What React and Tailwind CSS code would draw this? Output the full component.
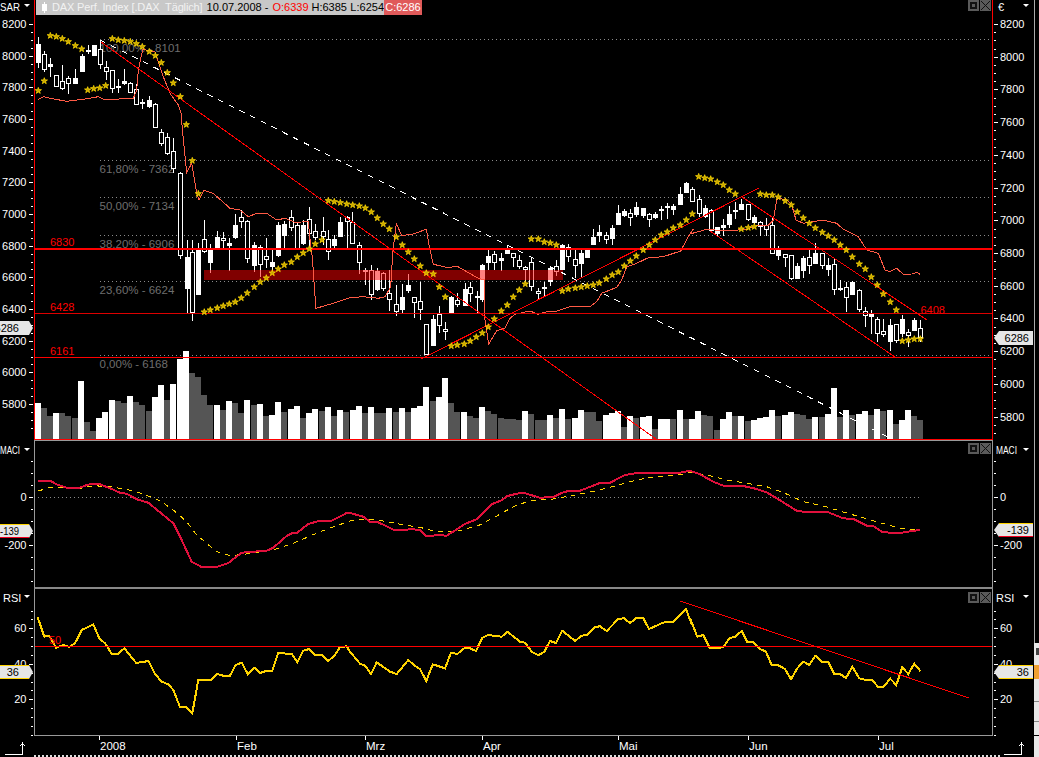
// chart data is kept in page pixels, each svg viewBox uses page coordinates
const at = (ox, oy, list) => list.map(([x, y]) => [ox + x / 3, oy + y / 3]);
const line = (list) => list.map(([x, y]) => `${x.toFixed(1)},${y.toFixed(1)}`).join(" ");

// x, high, low, body top, body bottom, filled
const candles = [
  [38.3,37,68,44,62,1],[44.3,51,72,54,69,0],[50.3,58,77,64,66,1],[56.3,75,87,75,86,0],[62.3,65,90,81,88,0],[68.3,76,94,78,83,0],
  [75.3,69,83,78,83,1],[81.5,54,71,55.5,71,1],[87.6,45,54,50,51,1],[93.7,45,55,45,55,1],[99.7,40,69,49,64,0],[105.5,61,80,66.5,71,0],
  [112,70,93,70,88,0],[118,79,93,86,87,1],[124.3,69,85,81,83,1],[130.3,82,93,82.5,92,0],[136.3,84,105,89,104,0],[142.3,99,109,102,103,1],
  [149.3,96,108,100,106,1],[155.3,103,127,103.5,127,0],[161.3,129,146,132,143,0],[167.3,133,155,137,153,0],[173.3,138,173,151,168,0],
  [180.3,172,259,172.5,254.5,0],[186.5,240,314,257,288,1],[192.3,240,320.7,251.7,311.7,0],[198.3,243,293.5,248,293.5,1],[204.3,220,253,239,250.7,0],
  [210.3,244,273,249,262,1],[217.3,231,250,237,248,1],[223.3,232,250,238,240,0],[229.3,238,270.7,243,245,1],[235.3,214,239,225,237,1],
  [241.3,210,228,217,221,0],[247.3,220,263,220.5,258,0],[254.3,242,272,245,265,1],[260.3,245,277,247,263.5,0],[266.3,238,268,256,258.7,0],
  [272.3,250,273,262,266,1],[278.3,222,257,225,255,1],[284.3,221,248,224,235,1],[291.3,210,231,217,227,0],[297.3,223,248,225,247.7,0],
  [303.3,220,245,225,243,1],[309.3,207,250,219,233,0],[315.3,224,240,231,236.7,0],[322.6,217,245,231,236,0],[328.3,230,260,238.5,251.3,0],
  [334.3,235,250,239,245,1],[340.3,217,236,222,236,1],[346.6,216,248,217,221,0],[352.3,212,243,221.7,242.7,0],[359.3,242,274,245,261.7,0],
  [365.3,268,285,270,270.5,1],[371.3,265,300,270,294.3,0],[377.3,268,290.7,271,289,1],[383.3,272,290.7,273.3,287.7,0],[389.3,270,311,293.3,299.3,0],
  [396.3,285,315.7,304.3,311,0],[402.3,284,313,297.3,309,1],[408.3,274,293,285,290,1],[414.3,297,318,297.3,301.7,0],[420.3,281.7,320,301.3,309.3,0],
  [426.3,324,355,324.3,354,0],[433.3,315,345,319,345,1],[439.3,306,332.7,314,324.7,0],[445.3,322,340,329.3,331.3,0],[451.3,296,312,297,311.7,1],
  [457.3,293,306.7,300,304,0],[464.7,283,305,289,305,1],[470.3,282.3,301.7,287,292.7,0],[476.7,291,313,296,297,1],[482.3,264,301.7,265,299.3,1],
  [488.3,250,270,256,262,1],[494.3,251,270,254,262.3,0],[501.3,253,271,258,260,1],[507.3,245,253,248.7,252.7,1],[513.3,253,266.7,253.3,257.3,0],
  [519.3,255,268.7,260,265.7,0],[525.3,266,285,266.7,268.7,0],[531.3,257.7,290.7,262.3,286,0],[538.3,288,299,291,293.3,0],[544.3,281.7,296,286.5,287,1],
  [550.3,267,285.7,268.3,281,1],[556.3,260,276,266.3,271.3,0],[562.3,244,269,245.3,268.7,1],[568.3,244,261.7,246.7,256,0],[575.3,249,278,259,264.7,0],
  [581.3,248,276.7,253.3,263.3,1],[587.3,248,257,249,257,1],[593.3,229.3,245,237,243.7,1],[599.3,225,241.7,232.3,235,1],[606.3,232,244,235.3,238.7,0],
  [612.3,225,245,228,238.3,1],[618.3,205,224,213.3,224,1],[624.3,209,217,211,215,1],[630.3,209.3,225.7,213.3,217.3,0],[636.3,202.3,217,207.3,213.7,1],
  [643.3,208,218,208.3,215,1],[649.3,213,226.7,213.7,219.3,0],[655.3,212,219,214,217,1],[661.3,205.7,220,209,210.3,1],[667.3,203.3,219,205.7,206,1],
  [673.3,204,215,206,208.7,1],[680.3,187.3,204,194,203.7,1],[686.3,181.7,193,183.3,192,1],[692.3,186.7,201.7,189.3,201,0],[698.7,195,216.7,199.3,213.3,0],
  [704.7,205,218,208,216,1],[710.7,209,232,210,230,0],[717.3,226.7,236.7,226.7,233.3,1],[723.3,219,235.7,225,226.5,1],[729.3,206,227.7,214,224,1],
  [735.3,201.7,219.3,210.3,210.8,1],[741.3,199,209.3,204,209.3,1],[748.3,204,220.7,204,219,0],[754.3,215,224,216.7,222.3,1],[760.3,221,236,221.7,226,0],
  [766.3,218,236,225,229.3,0],[772.3,218,253.3,225,252.7,0],[778.3,246,260,250,255,1],[785.3,254.3,266.7,254.3,257.3,0],[791.3,255,280,255.3,278.3,0],
  [797.3,263.3,278,266,277.7,1],[803.3,256,277.7,258.3,270,1],[809.3,250,274,257.3,264.7,0],[815.3,243.3,262.7,252.7,262.7,1],[822.3,253,269,253.3,264.7,0],
  [828.3,258.3,276,264.7,269,1],[834.3,259,295,264.3,289.3,0],[840.3,280,291,288,288.5,1],[846.3,281.7,312,287.3,296.7,0],[852.3,280.7,294,282,294,1],
  [859.3,289,311.7,290,308.7,0],[865.3,307.3,326.7,310.7,315,0],[871.3,310,334,314,315.7,1],[877.3,317.3,342.3,319.3,332.7,0],[883.3,319,336.7,331.3,334.3,0],
  [890.3,319,350.7,325,340.7,1],[896.3,324,342.7,324.3,340,0],[902.3,315,337.3,319,333.3,1],[908.3,329,346.7,332.3,335,0],[914.3,318.3,330,320,330,1],
  [920.3,320,342.3,328.3,336.7,0],
];

// x, top, white
const volume = [
  [35,403,1],[41,408,0],[47,416,0],[53,413,1],[59,413,0],[65,416,0],[72,418,0],[78,381,1],[84,422,0],[90,431,0],[96,418,1],[102,412,1],[109,400,1],
  [115,401,0],[121,403,0],[127,396,1],[133,402,0],[139,405,0],[146,411,0],[152,397,1],[158,385,1],[164,400,0],[170,384,1],[177,359,1],[183,351,1],
  [189,373,0],[195,377,0],[201,395,0],[207,405,0],[214,405,1],[220,410,0],[226,401,1],[232,403,0],[238,413,0],[244,400,1],[251,405,0],[257,404,1],
  [263,416,0],[269,415,1],[275,402,1],[281,412,0],[288,409,1],[294,406,1],[300,418,0],[306,413,1],[312,409,1],[319,411,0],[325,407,1],[331,416,0],
  [337,410,1],[343,412,0],[350,410,1],[356,406,1],[362,413,0],[368,407,1],[374,413,0],[380,413,0],[386,408,1],[393,412,0],[399,408,1],[405,412,0],
  [411,408,1],[417,406,1],[423,387,1],[430,401,0],[436,397,1],[442,378,1],[448,403,0],[454,412,0],[461,412,1],[467,416,0],[473,418,0],[479,407,1],
  [485,411,0],[491,414,0],[498,418,0],[504,419,0],[510,419,0],[516,420,0],[522,411,1],[528,414,0],[535,420,0],[541,420,0],[547,415,1],[553,418,0],
  [559,409,1],[565,419,0],[572,418,1],[578,410,1],[584,412,0],[590,412,0],[596,421,0],[603,415,1],[609,413,1],[615,411,1],[621,427,0],[627,416,1],
  [633,418,0],[640,417,1],[646,416,1],[652,429,0],[658,419,1],[664,419,1],[670,419,0],[677,410,1],[683,419,0],[689,419,1],[695,411,1],[701,415,0],
  [707,416,0],[714,430,0],[720,419,1],[726,412,1],[732,416,0],[738,416,1],[745,421,0],[751,420,1],[757,418,1],[763,417,1],[769,410,1],[775,416,0],
  [782,415,1],[788,412,1],[794,414,0],[800,415,0],[806,419,0],[812,417,1],[819,417,0],[825,414,1],[831,388,1],[837,417,0],[843,410,1],[849,415,0],
  [856,414,1],[862,411,1],[868,415,0],[874,409,1],[880,411,0],[887,410,1],[893,424,0],[899,420,1],[905,410,1],[911,416,0],[917,420,0],
];

const stars = [
  ...at(0, 0, [[115,272],[133,243],[151,107],[169,110],[187,116],[205,125],[226,137],[245,147],[263,270],[281,266],[299,264],[317,257],[337,116],[355,120],[373,122],[391,125],[409,131],[427,140],[448,155],[466,167],[484,188],[502,218],[520,249],[541,290],[559,374],[577,482],[595,581],[985,602],[1003,605],[1021,608],[1040,612]]),
  ...at(0, 230, [[613,246],[631,240],[652,234],[670,228],[688,222],[706,216],[724,204],[742,189],[763,171],[781,156],[799,144],[817,129],[835,117],[853,105],[874,96],[892,81],[910,69],[928,57],[946,42],[966,30]]),
  ...at(350, 170, [[8,105],[28,108],[46,114],[64,126],[82,144],[100,162],[118,177],[139,201],[157,225],[175,246],[193,267],[211,288],[229,309],[250,312],[268,351],[286,381],[304,528],[322,525],[343,522],[361,513],[379,501],[397,489],[415,471],[433,447],[454,423],[472,405],[490,381],[508,360],[526,342],[544,207],[565,207],[583,216],[601,219],[619,225],[637,363],[655,357],[676,354],[694,351],[712,348],[730,345],[748,339],[769,327],[787,315],[805,306],[823,288],[841,273],[859,258],[880,240],[898,225],[916,210],[934,195],[952,186],[970,174],[991,165],[1009,150],[1027,132]]),
  ...at(690, 0, [[26,530],[44,534],[62,537],[82,546],[100,555],[118,570],[136,582],[211,582],[229,585],[247,585],[265,591],[286,603],[304,615],[322,636],[340,654]]),
  ...at(690, 220, [[154,27],[175,23],[193,20],[358,10],[376,24],[397,37],[415,48],[433,60],[451,75],[469,90],[487,111],[508,132],[526,147],[544,171],[562,195],[580,222],[601,246],[619,270],[637,363],[655,360],[673,357],[691,357]]),
];

const envelope = [
  ...at(0, 0, [[115,298],[130,290],[150,295],[200,304],[250,298],[295,290],[315,300],[370,296],[400,295],[410,270],[415,210],[428,148],[465,155],[490,230],[510,280],[535,315],[543,340],[548,400],[560,518],[575,490],[590,580],[597,600],[612,571],[640,580],[690,625],[720,630],[745,650],[770,640],[800,640],[830,660],[855,655],[885,667],[925,665],[932,740]]),
  ...at(0, 230, [[937,80],[940,125],[943,170],[948,235],[1000,220],[1050,203]]),
  ...at(350, 170, [[40,380],[85,385],[105,380],[122,350],[128,250],[139,160],[155,197],[190,192],[229,178],[238,230],[250,283],[295,293],[320,288],[385,325],[404,330],[405,450],[416,522],[440,482],[465,475],[480,445],[495,433],[540,423],[565,433],[590,425],[620,423],[660,410],[720,410],[740,395],[755,370],[800,352],[815,330],[830,290],[860,280],[895,263],[940,260],[992,243],[1015,200],[1030,177]]),
  ...at(690, 220, [[0,42],[50,28],[110,33],[170,28],[205,15],[235,15]]),
  ...at(690, 0, [[250,660],[260,600],[265,595],[290,600],[305,615],[318,660],[340,670],[400,660],[440,670],[460,688]]),
  ...at(690, 220, [[505,50],[530,90],[565,100],[585,150],[600,155],[620,145],[640,163],[665,162],[680,157],[690,163]]),
];

const macdLine = [
  ...at(0, 435, [[115,137],[150,137],[170,148],[205,160],[235,160],[260,150],[280,146],[300,148],[330,160],[360,173],[380,176],[410,193],[445,203],[490,240],[520,265],[545,315],[575,380],[605,396],[650,396],[685,384],[725,353],[760,350],[800,347],[820,338],[860,303],[875,295],[890,294],[925,267],[960,257],[995,257],[1040,234]]),
  ...at(350, 435, [[0,234],[40,245],[60,260],[85,262],[130,284],[170,284],[180,282],[210,285],[228,302],[250,302],[262,300],[290,302],[345,267],[380,253],[425,208],[455,196],[472,183],[510,174],[525,175],[570,188],[610,186],[640,172],[660,167],[690,167],[750,144],[780,143],[825,120],[860,114],[985,114],[1020,107]]),
  ...at(690, 435, [[0,107],[30,118],[70,140],[100,152],[160,153],[200,162],[230,172],[260,190],[320,227],[340,230],[410,230],[460,250],[490,252],[530,272],[550,273],[575,290],[605,294],[635,293],[660,289],[690,285]]),
];

const signalLine = [
  ...at(0, 435, [[115,168],[150,157],[205,157],[240,160],[280,152],[330,155],[400,167],[445,183],[480,197],[520,225],[560,260],[590,300],[650,350],[690,362],[760,355],[820,345],[880,325],[960,290],[1050,258]]),
  ...at(350, 435, [[30,253],[70,253],[130,263],[160,270],[210,277],[250,288],[320,289],[385,272],[440,243],[490,215],[540,197],[610,192],[660,183],[725,170],[780,157],[840,140],[900,127],[1000,118]]),
  ...at(690, 435, [[0,112],[50,120],[110,135],[170,145],[230,155],[285,175],[340,200],[400,213],[480,237],[560,260],[630,280],[690,285]]),
];

const rsiLine = [
  ...at(0, 585, [[113,97],[133,155],[148,152],[168,188],[190,180],[208,186],[225,175],[245,135],[280,118],[298,160],[315,175],[335,206],[355,206],[373,190],[408,233],[428,232],[445,227],[465,267],[485,290],[505,298],[520,315],[540,366],[558,366],[577,385],[595,285],[633,285],[652,267],[670,272],[690,272],[707,240],[725,233],[743,267],[763,248],[780,264],[800,257],[817,257],[835,204],[875,207],[892,232],[910,197],[928,192],[945,209],[965,209],[985,228],[1005,210],[1020,186],[1040,184]]),
  ...at(350, 585, [[0,200],[30,236],[45,242],[63,267],[80,232],[120,260],[140,267],[175,225],[195,243],[210,252],[229,288],[248,238],[285,250],[303,203],[322,207],[343,190],[360,190],[378,198],[397,158],[415,150],[455,155],[472,140],[510,170],[525,173],[545,200],[565,211],[583,200],[600,168],[618,174],[637,137],[675,168],[695,152],[710,150],[735,126],[750,124],[770,138],[805,102],[822,100],[840,114],[858,100],[880,100],[897,132],[935,115],[950,110],[970,110],[1008,73],[1025,118]]),
  ...at(690, 585, [[0,100],[22,155],[40,150],[60,190],[100,187],[118,160],[135,155],[155,138],[172,172],[190,172],[210,192],[228,200],[245,241],[265,241],[285,252],[303,283],[322,250],[340,230],[358,240],[376,212],[397,232],[415,232],[433,268],[450,267],[468,279],[487,245],[508,280],[525,284],[545,284],[565,306],[580,306],[601,281],[619,300],[637,247],[655,267],[673,236],[691,258]]),
];

const fibo = [
  { y: 39.5, label: "100,00% - 8101", ty: 52 },
  { y: 160.5, label: "61,80% - 7362", ty: 173 },
  { y: 197.5, label: "50,00% - 7134", ty: 210 },
  { y: 235.5, label: "38,20% - 6906", ty: 248 },
  { y: 281.5, label: "23,60% - 6624", ty: 294 },
  { y: 355.5, label: "0,00% - 6168", ty: 368 },
];

const months = [[99, "2008"], [236, "Feb"], [365, "Mrz"], [482, "Apr"], [618, "Mai"], [748, "Jun"], [878, "Jul"]];

const starPath = (() => {
  let d = "";
  for (let i = 0; i < 10; i++) {
    const r = i % 2 ? 1.3 : 3.3;
    const a = (Math.PI / 5) * i - Math.PI / 2;
    d += `${i ? "L" : "M"}${(r * Math.cos(a)).toFixed(2)} ${(r * Math.sin(a)).toFixed(2)}`;
  }
  return d + "Z";
})();

function Candle({ c }) {
  const [x, hi, lo, top, bot, filled] = c;
  const cx = Math.round(x) + 0.5;
  const y1 = Math.round(top) + 0.5;
  const h = Math.max(Math.round(bot) - Math.round(top), 1);
  return (
    <g shapeRendering="crispEdges">
      <line x1={cx} x2={cx} y1={Math.round(hi)} y2={Math.round(lo)} stroke="#fff" />
      <rect x={cx - 2} y={y1} width={4} height={h} fill={filled ? "#fff" : "#000"} stroke="#fff" />
    </g>
  );
}

function WindowButtons({ className }) {
  return (
    <div className={`absolute right-[1px] flex gap-[1px] ${className}`}>
      <div className="flex h-[11px] w-[11px] items-center justify-center bg-[#5a5a5a]">
        <div className="h-[7px] w-[7px] border-2 border-[#111]" />
      </div>
      <div className="flex h-[11px] w-[11px] items-center justify-center bg-[#5a5a5a]">
        <svg width="9" height="9" viewBox="0 0 9 9" stroke="#111" strokeWidth="1" shapeRendering="crispEdges">
          <path d="M0 0L9 9M9 0L0 9" />
        </svg>
      </div>
    </div>
  );
}

function Ticks({ side, from, to, step, major, pos }) {
  const out = [];
  for (let v = from; v >= to; v -= step) {
    const y = Math.round(pos(v)) + 0.5;
    const isMajor = major.includes(v);
    const x1 = side === "left" ? (isMajor ? 29 : 31) : 994;
    const x2 = side === "left" ? 33 : isMajor ? 998 : 996;
    out.push(<line key={v} x1={x1} x2={x2} y1={y} y2={y} stroke="#fff" shapeRendering="crispEdges" />);
    if (isMajor) {
      out.push(
        <text
          key={`t${v}`}
          x={side === "left" ? 26.5 : 1000}
          y={y + 3.5}
          textAnchor={side === "left" ? "end" : "start"}
          className="fill-white text-[11px]"
        >
          {v}
        </text>
      );
    }
  }
  return out;
}

function Dropdown({ x, y }) {
  return <path d={`M${x} ${y}h6l-3 3z`} fill="#fff" />;
}

function LeftTag({ y, text, top = "#e6e6e6", bottom = "#e6e6e6", fit }) {
  return (
    <g>
      <path d={`M0 ${y}H29L33 ${y + 7}L29 ${y + 14}H0Z`} fill="#e6e6e6" />
      <path d={`M0 ${y + 0.5}H29`} stroke={top} shapeRendering="crispEdges" />
      <path d={`M0 ${y + 13.5}H29`} stroke={bottom} shapeRendering="crispEdges" />
      <text x={19} y={y + 11} textAnchor="end" textLength={fit} lengthAdjust="spacingAndGlyphs" className="fill-black text-[11px]">{text}</text>
    </g>
  );
}

function RightTag({ y, text, top = "#e6e6e6", bottom = "#e6e6e6" }) {
  return (
    <g>
      <path d={`M994 ${y + 7}L999 ${y}H1033V${y + 14}H999Z`} fill="#e6e6e6" />
      <path d={`M999 ${y + 0.5}H1033`} stroke={top} shapeRendering="crispEdges" />
      <path d={`M999 ${y + 13.5}H1033`} stroke={bottom} shapeRendering="crispEdges" />
      <text x={1029} y={y + 11} textAnchor="end" className="fill-black text-[11px]">{text}</text>
    </g>
  );
}

function CornerArrow({ x }) {
  return (
    <path d={`M${x} 754.5H${x + 17.5}V743M${x + 15.5} 746L${x + 17.5} 743L${x + 19.5} 746`} fill="none" stroke="#fff" shapeRendering="crispEdges" />
  );
}

function MainChart() {
  return (
    <svg viewBox="35 0 957 439" className="block h-full w-full">
      {fibo.map((f) => (
        <line key={f.label} x1={100} x2={990} y1={f.y} y2={f.y} stroke="#8a8a8a" strokeDasharray="1 3" shapeRendering="crispEdges" />
      ))}
      {fibo.map((f) => (
        <text key={f.label} x={99.5} y={f.ty} className="fill-[#6e6e6e] text-[11.5px]">{f.label}</text>
      ))}
      {candles.map((c, i) => <Candle key={i} c={c} />)}
      {volume.map(([x, top, white]) => (
        <rect key={x} x={x} y={top} width={6} height={439 - top} fill={white ? "#fff" : "#555"} shapeRendering="crispEdges" />
      ))}
      <rect x={204} y={270} width={359} height={10} fill="#ff0000" fillOpacity="0.5" />
      <polyline points={line(envelope)} fill="none" stroke="#ff5a45" shapeRendering="crispEdges" />
      <g stroke="#ff0000" shapeRendering="crispEdges">
        <line x1={35} x2={992} y1={248.5} y2={248.5} strokeWidth="2" />
        <line x1={35} x2={992} y1={313.5} y2={313.5} stroke="#dd0000" />
        <line x1={35} x2={992} y1={357.5} y2={357.5} strokeWidth="1.5" />
        <line x1={101} y1={42} x2={656} y2={439} />
        <line x1={421} y1={359} x2={759} y2={188} />
        <line x1={742} y1={197} x2={927} y2={320} />
        <line x1={710} y1={231} x2={895} y2={357} />
      </g>
      <line x1={100} y1={40} x2={890} y2={438} stroke="#fff" strokeDasharray="6 6" shapeRendering="crispEdges" />
      {stars.map(([x, y], i) => (
        <path key={i} d={starPath} transform={`translate(${x.toFixed(1)} ${y.toFixed(1)})`} fill="#c8a400" stroke="#ffdc00" strokeWidth="0.8" />
      ))}
      <text x={50} y={246} className="fill-[#f00] text-[11px]">6830</text>
      <text x={50} y={311} className="fill-[#f00] text-[11px]">6428</text>
      <text x={50} y={355} className="fill-[#f00] text-[11px]">6161</text>
      <text x={920.5} y={314} className="fill-[#f00] text-[11px]">6408</text>
    </svg>
  );
}

function MacdChart() {
  return (
    <svg viewBox="35 441 957 146" className="block h-full w-full">
      <line x1={38} x2={920} y1={497.5} y2={497.5} stroke="#8a8a8a" strokeDasharray="1 3" shapeRendering="crispEdges" />
      <polyline points={line(signalLine)} fill="none" stroke="#ffd400" strokeDasharray="5 5" shapeRendering="crispEdges" />
      <polyline points={line(macdLine)} fill="none" stroke="#e0103c" strokeWidth="2" shapeRendering="crispEdges" />
    </svg>
  );
}

function RsiChart() {
  return (
    <svg viewBox="35 589 957 146" className="block h-full w-full">
      <polyline points={line(rsiLine)} fill="none" stroke="#ffd400" strokeWidth="2" shapeRendering="crispEdges" />
      <line x1={35} x2={992} y1={646.5} y2={646.5} stroke="#f00" shapeRendering="crispEdges" />
      <line x1={680} y1={601} x2={969} y2={698} stroke="#f00" shapeRendering="crispEdges" />
      <text x={49} y={644} className="fill-[#f00] text-[11px]">50</text>
    </svg>
  );
}

export default function App() {
  const mainLeft = (v) => 24 + ((8200 - v) / 200) * 31.67;
  const mainRight = (v) => 24 + ((8200 - v) / 200) * 32.72;
  const macd = (v) => 497.3 - (v / 100) * 24;
  const rsi = (v) => 699.3 - ((v - 20) / 5) * 8.87;
  const priceMajor = [8200, 8000, 7800, 7600, 7400, 7200, 7000, 6800, 6600, 6400, 6200, 6000, 5800];

  return (
    <div className="flex h-[757px] w-[1039px] flex-col overflow-hidden bg-black font-['Liberation_Sans',Arial,sans-serif] text-white">
      {/* kurs panel */}
      <div className="flex h-[440px]">
        <svg viewBox="0 0 34 440" className="block h-full w-[34px]">
          <text x={0} y={11} textLength={20} lengthAdjust="spacingAndGlyphs" className="fill-white text-[11px]">SAR</text>
          <Dropdown x={24} y={4} />
          <Ticks side="left" from={8200} to={5650} step={50} major={priceMajor} pos={mainLeft} />
          <LeftTag y={321} text="6286" />
        </svg>
        <div className="relative h-full w-[959px] box-border border-x border-b border-[#f00]">
          <MainChart />
          <div className="absolute left-[1px] top-0 flex h-[15px] items-center whitespace-nowrap text-[11px] leading-none">
            <div className="flex h-full w-[348px] items-center bg-[#c8c8c8] pl-[6px]">
              <div className="relative mr-[5px] flex h-[11px] w-[5px] items-center justify-center">
                <div className="h-[7px] w-[5px] bg-white" />
                <div className="absolute h-full w-[1px] bg-white" />
              </div>
              <span className="mr-[4px] w-[151px] text-[#f2f2f2] tracking-[-0.15px]">DAX Perf. Index [.DAX&nbsp; Täglich]</span>
              <span className="mr-[4px] w-[62px] text-black">10.07.2008 -</span>
              <span className="mr-[3px] w-[36px] text-[#f00]">O:6339</span>
              <span className="mr-[3px] w-[36px] text-black">H:6385</span>
              <span className="text-black">L:6254</span>
            </div>
            <div className="flex h-full w-[38px] items-center justify-center bg-[#e05a5a] text-white">C:6286</div>
          </div>
          <WindowButtons className="top-0" />
        </div>
        <svg viewBox="993 0 46 440" className="block h-full w-[46px]">
          <text x={998} y={11} className="fill-white text-[11px]">€</text>
          <Dropdown x={1023} y={4} />
          <line x1={1034.5} x2={1034.5} y1={0} y2={440} stroke="#aaa" shapeRendering="crispEdges" />
          <Ticks side="right" from={8200} to={5700} step={50} major={priceMajor} pos={mainRight} />
          <RightTag y={331} text="6286" />
        </svg>
      </div>

      {/* macd panel */}
      <div className="flex h-[149px]">
        <svg viewBox="0 440 34 149" className="block h-full w-[34px]">
          <text x={0} y={454} textLength={20} lengthAdjust="spacingAndGlyphs" className="fill-white text-[11px]">MACI</text>
          <Dropdown x={24} y={448} />
          <Ticks side="left" from={150} to={-350} step={50} major={[0, -200]} pos={macd} />
          <LeftTag y={524} text="-139" top="#ffd400" bottom="#f00020" fit={19} />
        </svg>
        <div className="relative h-full w-[959px] box-border border-x border-t border-b-2 border-x-[#999] border-t-[#999] border-b-[#888]">
          <MacdChart />
          <WindowButtons className="top-[2px]" />
        </div>
        <svg viewBox="993 440 46 149" className="block h-full w-[46px]">
          <text x={996} y={454} textLength={21} lengthAdjust="spacingAndGlyphs" className="fill-white text-[11px]">MACI</text>
          <Dropdown x={1023} y={448} />
          <line x1={1034.5} x2={1034.5} y1={440} y2={589} stroke="#aaa" shapeRendering="crispEdges" />
          <Ticks side="right" from={150} to={-350} step={50} major={[0, -200]} pos={macd} />
          <RightTag y={523} text="-139" top="#ffd400" bottom="#f00020" />
        </svg>
      </div>

      {/* rsi panel */}
      <div className="flex h-[147px]">
        <svg viewBox="0 589 34 147" className="block h-full w-[34px]">
          <text x={3} y={602} className="fill-white text-[11px]">RSI</text>
          <Dropdown x={24} y={595} />
          <Ticks side="left" from={70} to={-5} step={5} major={[60, 40, 20]} pos={rsi} />
          <LeftTag y={665} text="36" top="#ffd400" bottom="#ffd400" />
        </svg>
        <div className="relative h-full w-[959px] box-border border-x border-b border-[#999]">
          <RsiChart />
          <WindowButtons className="top-[3px]" />
        </div>
        <svg viewBox="993 589 46 147" className="block h-full w-[46px]">
          <text x={996} y={602} className="fill-white text-[11px]">RSI</text>
          <Dropdown x={1023} y={595} />
          <line x1={1034.5} x2={1034.5} y1={589} y2={643} stroke="#aaa" shapeRendering="crispEdges" />
          <Ticks side="right" from={70} to={-5} step={5} major={[60, 40, 20]} pos={rsi} />
          <RightTag y={665} text="36" top="#ffd400" bottom="#ffd400" />
          <rect x={1034} y={643} width={5} height={22} fill="#e8e8e8" />
          <rect x={1036} y={648} width={3} height={7} fill="#444" />
          <rect x={1034} y={665} width={5} height={14} fill="#f0a030" />
          <rect x={1034} y={679} width={5} height={56} fill="#e8e8e8" />
          <rect x={1034} y={701} width={5} height={1} fill="#888" />
          <rect x={1034} y={721} width={5} height={1} fill="#888" />
        </svg>
      </div>

      {/* time axis */}
      <svg viewBox="0 736 1039 19" className="block h-[19px] w-[1039px]">
        <CornerArrow x={5} />
        <CornerArrow x={1004} />
        {months.map(([x, label]) => (
          <g key={label}>
            <line x1={x + 0.5} x2={x + 0.5} y1={736} y2={740} stroke="#fff" shapeRendering="crispEdges" />
            <text x={x + 1} y={750} className="fill-white text-[11.5px]">{label}</text>
          </g>
        ))}
        <rect x={1034} y={736} width={5} height={19} fill="#e8e8e8" />
      </svg>
      <div className="flex h-[2px]">
        <div className="ml-[34px] h-[2px] w-[966px] border-b-2 border-dotted border-[#ddd]" />
        <div className="ml-[34px] h-[2px] w-[5px] bg-[#e8e8e8]" />
      </div>
    </div>
  );
}
